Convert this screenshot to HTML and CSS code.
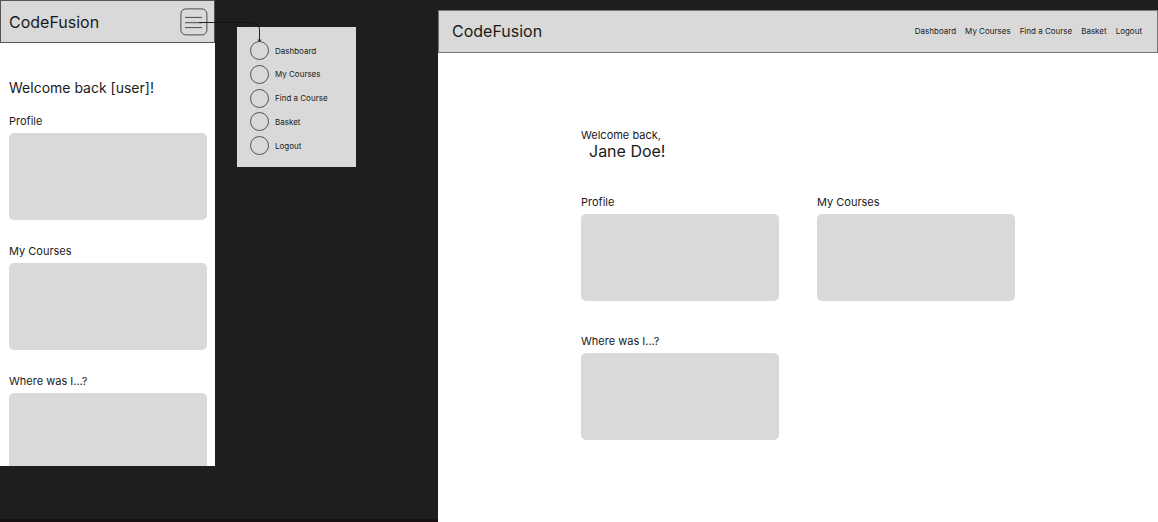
FILE: index.html
```html
<!DOCTYPE html>
<html lang="en">
<head>
<meta charset="utf-8">
<meta name="viewport" content="width=device-width, initial-scale=1">
<title>CodeFusion wireframes</title>
<link rel="stylesheet" href="styles.css">
</head>
<body>
<main class="canvas">
  <section class="phone" aria-label="Mobile dashboard">
    <header class="bar phone-bar">
      <span class="brand">CodeFusion</span>
      <button class="burger" type="button" aria-label="Open menu">
        <svg width="28" height="28" viewBox="0 0 28 28" fill="none" stroke="#4a4a4a">
          <rect x="0.9" y="0.9" width="26" height="26" rx="5"/>
          <path d="M5 9.4H22M5 14.7H22M5 19.6H22"/>
        </svg>
      </button>
    </header>
    <div class="phone-body">
      <h1 class="phone-title">Welcome back [user]!</h1>
      <section class="panel"><h2 class="label">Profile</h2><div class="card"></div></section>
      <section class="panel"><h2 class="label">My Courses</h2><div class="card"></div></section>
      <section class="panel"><h2 class="label">Where was I...?</h2><div class="card card-cut"></div></section>
    </div>
  </section>

  <nav class="menu" aria-label="Mobile menu">
    <svg class="connector" width="66" height="24" viewBox="0 0 66 24" fill="none" stroke="#111" stroke-width="0.9">
      <path d="M1 3.5H52Q61.5 3.5 61.5 11V22M60 20.5L61.5 22.5L63 20.5"/>
    </svg>
    <a class="menu-item" href="#"><span class="dot"></span>Dashboard</a>
    <a class="menu-item" href="#"><span class="dot"></span>My Courses</a>
    <a class="menu-item" href="#"><span class="dot"></span>Find a Course</a>
    <a class="menu-item" href="#"><span class="dot"></span>Basket</a>
    <a class="menu-item" href="#"><span class="dot"></span>Logout</a>
  </nav>

  <section class="desktop" aria-label="Desktop dashboard">
    <header class="bar desktop-bar">
      <span class="brand">CodeFusion</span>
      <nav class="links" aria-label="Main">
        <a href="#">Dashboard</a>
        <a href="#">My Courses</a>
        <a href="#">Find a Course</a>
        <a href="#">Basket</a>
        <a href="#">Logout</a>
      </nav>
    </header>
    <div class="desktop-body">
      <h1 class="greeting">Welcome back,<span class="name">Jane Doe!</span></h1>
      <section class="panel"><h2 class="label">Profile</h2><div class="card"></div></section>
      <section class="panel"><h2 class="label">My Courses</h2><div class="card"></div></section>
      <section class="panel"><h2 class="label">Where was I...?</h2><div class="card"></div></section>
    </div>
  </section>
</main>
</body>
</html>
```

FILE: styles.css
```css
* { box-sizing: border-box; }

body {
  margin: 0;
  background: #1e1e1e;
  color: #1a1a1a;
  font-family: Inter, "Liberation Sans", sans-serif;
}

h1, h2 { margin: 0; font-weight: 400; }
a { color: inherit; text-decoration: none; }

.canvas {
  display: flex;
  align-items: flex-start;
  min-height: 100vh;
  box-shadow: inset 0 -3px #190f15;
}

.bar {
  display: flex;
  align-items: center;
  justify-content: space-between;
  background: #d9d9d9;
}

.brand { font-size: 16px; line-height: 20px; }
.label { font-size: 11px; line-height: 16px; }

.panel {
  display: flex;
  flex-direction: column;
  gap: 4px;
}

.card {
  height: 87px;
  border-radius: 5px;
  background: #d9d9d9;
}

.card-cut {
  height: 73px;
  border-radius: 5px 5px 0 0;
}

.phone {
  flex: 0 0 215px;
  background: #fff;
}

.phone-bar {
  height: 43px;
  padding: 0 6px 0 8px;
  border: 1px solid #555;
}

.burger {
  padding: 0;
  border: 0;
  background: none;
  line-height: 0;
}

.phone-body {
  display: flex;
  flex-direction: column;
  gap: 23px;
  padding: 35px 8px 0 9px;
}

.phone-title {
  margin-bottom: -8px;
  font-size: 14px;
  line-height: 20px;
}

.menu {
  position: relative;
  display: flex;
  flex: 0 0 119px;
  flex-direction: column;
  justify-content: space-between;
  min-height: 140px;
  margin: 27px 82px 0 22px;
  padding: 14px 13px 12px;
  background: #d9d9d9;
}

.connector {
  position: absolute;
  top: -8px;
  left: -39px;
}

.menu-item {
  display: flex;
  align-items: center;
  gap: 6px;
  font-size: 8px;
  line-height: 12px;
}

.dot {
  width: 19px;
  height: 19px;
  border: 1px solid #555;
  border-radius: 50%;
}

.desktop {
  flex: 1;
  align-self: stretch;
  margin-top: 10px;
  background: #fff;
}

.desktop-bar {
  height: 43px;
  padding: 0 15px 2px 13px;
  border: 1px solid #777;
}

.links {
  display: flex;
  gap: 9px;
  font-size: 8px;
  line-height: 12px;
}

.desktop-body {
  display: grid;
  grid-template-columns: repeat(2, 198px);
  justify-content: center;
  gap: 32px 38px;
  padding: 74px 16px 48px;
}

.greeting {
  grid-column: 1 / -1;
  margin-bottom: 3px;
  font-size: 11px;
  line-height: 16px;
}

.name {
  display: block;
  padding-left: 8px;
  font-size: 16px;
}
```
